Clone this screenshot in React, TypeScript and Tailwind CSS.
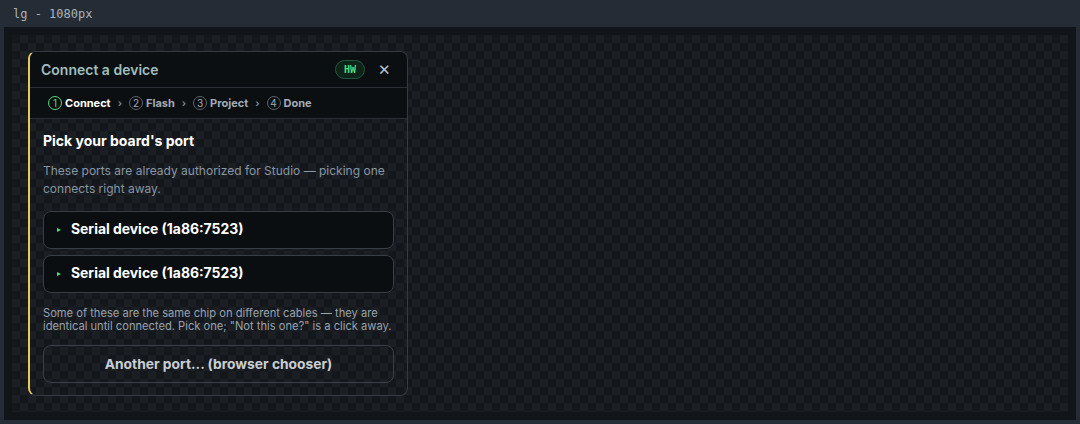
import React from 'react';

const steps = [
  { n: 1, label: 'Connect', active: true },
  { n: 2, label: 'Flash' },
  { n: 3, label: 'Project' },
  { n: 4, label: 'Done' },
];

const ports = ['Serial device (1a86:7523)', 'Serial device (1a86:7523)'];

function Stepper() {
  return (
    <div className="flex items-center gap-[7px] h-[31px] px-[18px] border-b border-[#2a2f36] bg-[#0c0f12] text-[11px] font-bold">
      {steps.map((s, i) => (
        <React.Fragment key={s.n}>
          <div className="flex items-center gap-[3px]">
            <span
              className={
                s.active
                  ? 'w-[14px] h-[14px] rounded-full border border-[#4ade80] text-[#4ade80] flex items-center justify-center text-[10px] font-normal'
                  : 'w-[14px] h-[14px] rounded-full border border-[#5b636e] text-[#a3aab3] flex items-center justify-center text-[10px] font-normal'
              }
            >
              {s.n}
            </span>
            <span className={s.active ? 'text-white' : 'text-[#a3aab3]'}>{s.label}</span>
          </div>
          {i < steps.length - 1 && <span className="text-[#7d858f] text-[10px]">›</span>}
        </React.Fragment>
      ))}
    </div>
  );
}

function PortButton({ label }: { label: string }) {
  return (
    <button className="h-[38px] w-full flex items-center gap-[10px] px-[13px] pb-[1px] rounded-lg border border-[#3a3f47] bg-[#0b0e11] text-[13.9px] font-bold text-white">
      <span className="w-0 h-0 border-y-[2.5px] border-y-transparent border-l-[4px] border-l-[#4ade80]" />
      {label}
    </button>
  );
}

export default function App() {
  return (
    <div
      className="w-[1080px] h-[424px] bg-[#252c35] flex flex-col px-1 pb-1"
      style={{ fontFamily: 'Inter, "Noto Sans", sans-serif' }}
    >
      <div className="h-7 flex items-center pl-[9px] text-[12px] text-[#aab3bd] font-['DejaVu_Sans_Mono',monospace]">
        lg - 1080px
      </div>

      <div className="flex-1 bg-[#111418] p-2 flex">
        <div className="flex-1 p-4 bg-[#14171b] bg-[image:conic-gradient(#1b1e23_25%,transparent_0_50%,#1b1e23_0_75%,transparent_0)] bg-[length:16px_16px]">
          <div className="w-[380px] rounded-lg border border-[#353a42] border-l-2 border-l-[#e8c95a] overflow-hidden">
            {/* header */}
            <div className="h-[36px] flex items-center justify-between pl-[11px] pr-[16px] bg-[#0c0f12] border-b border-[#2a2f36]">
              <span className="text-[14px] font-semibold text-[#9fbdbe]">Connect a device</span>
              <div className="flex items-center gap-[13px]">
                <span className="h-[19px] px-[8px] rounded-full border border-[#22583a] bg-[#0f2419] text-[#4ade80] text-[10px] font-bold flex items-center font-['DejaVu_Sans_Mono',monospace]">
                  HW
                </span>
                <span className="text-[#b5c3cf] text-[15px] leading-none">✕</span>
              </div>
            </div>

            <Stepper />

            {/* body */}
            <div className="px-[13px] pt-[12px] pb-[12px] flex flex-col">
              <h2 className="text-[14px] leading-5 font-bold text-white">Pick your board's port</h2>
              <p className="mt-[11px] text-[12px] leading-[18px] text-[#8896a5]">
                These ports are already authorized for Studio — picking one connects right away.
              </p>
              <div className="mt-[13px] flex flex-col gap-[6px]">
                {ports.map((p, i) => (
                  <PortButton key={i} label={p} />
                ))}
              </div>
              <p className="mt-[14px] text-[11.15px] leading-[13px] text-[#9aa3ad]">
                Some of these are the same chip on different cables — they are identical until connected. Pick one; "Not this one?" is a click away.
              </p>
              <button className="mt-[12px] h-[38px] w-full rounded-lg border border-[#3a3f47] text-[13.8px] font-bold text-[#c9ced4]">
                Another port... (browser chooser)
              </button>
            </div>
          </div>
        </div>
      </div>
    </div>
  );
}
